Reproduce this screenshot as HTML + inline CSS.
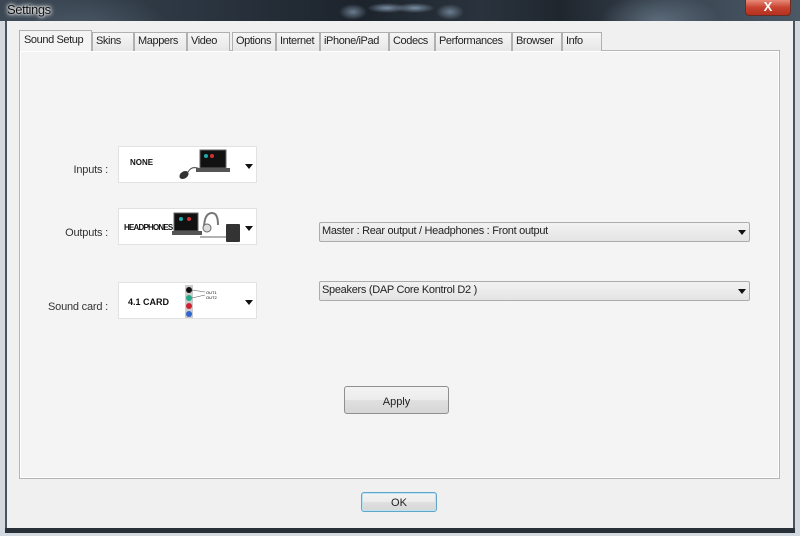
<!DOCTYPE html>
<html><head><style>
*{margin:0;padding:0;box-sizing:border-box}
body{width:800px;height:536px;overflow:hidden;position:relative;background:#d3d9df;font-family:"Liberation Sans",sans-serif;font-size:11px;color:#111}
.abs{position:absolute}
#title{left:0;top:0;width:800px;height:21px;background:
radial-gradient(ellipse 60px 30px at 660px 22px,#5d6c7c,transparent),
radial-gradient(ellipse 90px 40px at 80px 30px,#4a5866,transparent),
radial-gradient(ellipse 14px 8px at 353px 12px,#6b7d90,transparent),
radial-gradient(ellipse 14px 8px at 450px 12px,#6b7d90,transparent),
radial-gradient(ellipse 20px 5px at 387px 8px,#7a8ea2,transparent),
radial-gradient(ellipse 20px 5px at 415px 8px,#7a8ea2,transparent),
linear-gradient(90deg,#3b4753 0%,#2b3540 25%,#1c232b 45%,#2a333d 60%,#1f262e 70%,#3a4652 85%,#4b5866 100%)}
#title span{position:absolute;left:7px;top:2px;font-size:13px;color:#111;letter-spacing:-0.4px;text-shadow:0 0 6px #fff,0 0 4px #fff,0 0 2px #fff}
#close{left:745px;top:0;width:46px;height:16px;background:linear-gradient(#e88a7a,#c8432f 50%,#b2311e);border:1px solid #6a2b24;border-top:none;border-radius:0 0 4px 4px;color:#fff;text-align:center;font-weight:bold;font-size:13px;line-height:14px}
#frameL{left:5px;top:21px;width:2px;height:510px;background:#4a545e}
#frameR{left:793px;top:21px;width:2px;height:510px;background:#4a545e}
#client{left:7px;top:21px;width:786px;height:507px;background:#f0f0f0}
#bottom{left:5px;top:528px;width:790px;height:5px;background:#2a3038}
#panel{left:19px;top:50px;width:761px;height:429px;border:1px solid #b5b5b5;background:#f4f4f4;box-shadow:inset 0 0 0 1px #fff}
.tab{position:absolute;top:32px;height:19px;border:1px solid #b0b0b0;border-bottom:none;background:linear-gradient(#f6f6f6,#e6e6e6);font-size:11px;line-height:17px;padding-left:3px;white-space:nowrap;letter-spacing:-0.4px;color:#222}
.tab.sel{top:30px;height:21px;background:#f4f4f4;z-index:2;line-height:19px;padding-left:4px}
.lbl{position:absolute;text-align:right;width:100px;left:8px;color:#333;font-size:11px;letter-spacing:-0.2px}
.img{position:absolute;left:118px;width:139px;height:37px;background:#fff;border:1px solid #e2e2e2}
.arrow{position:absolute;width:0;height:0;border-left:4px solid transparent;border-right:4px solid transparent;border-top:5px solid #111}
.big{font-family:"Liberation Sans",sans-serif;font-weight:900;font-size:8px;position:absolute;color:#111}
.combo{position:absolute;left:319px;width:431px;height:20px;border:1px solid #acacac;border-radius:2px;background:linear-gradient(#f2f2f2,#e4e4e4);padding-left:2px;line-height:17px;font-size:11px;color:#222;letter-spacing:-0.3px}
.btn{position:absolute;border:1px solid #8f8f8f;border-radius:3px;background:linear-gradient(#f3f3f3 0%,#ececec 50%,#e0e0e0 51%,#d6d6d6 100%);text-align:center;font-size:11px;color:#222}
</style></head><body>
<div id="title" class="abs"><span>Settings</span></div>
<div id="close" class="abs">X</div>
<div id="client" class="abs"></div>
<div id="frameL" class="abs"></div>
<div id="frameR" class="abs"></div>
<div id="bottom" class="abs"></div>
<div id="panel" class="abs"></div>
<div class="tab sel" style="left:19px;width:73px">Sound Setup</div>
<div class="tab" style="left:92px;width:42px">Skins</div>
<div class="tab" style="left:134px;width:53px">Mappers</div>
<div class="tab" style="left:187px;width:43px">Video</div>
<div class="tab" style="left:232px;width:44px">Options</div>
<div class="tab" style="left:276px;width:44px">Internet</div>
<div class="tab" style="left:320px;width:69px">iPhone/iPad</div>
<div class="tab" style="left:389px;width:46px">Codecs</div>
<div class="tab" style="left:435px;width:77px">Performances</div>
<div class="tab" style="left:512px;width:50px">Browser</div>
<div class="tab" style="left:562px;width:40px">Info</div>

<div class="lbl" style="top:164px">Inputs :</div>
<div class="img" style="top:146px">
 <div class="big" style="left:11px;top:11px">NONE</div>
 <svg class="abs" style="left:55px;top:0" width="60" height="36">
  <rect x="26" y="3" width="26" height="18" fill="#111" stroke="#666"/>
  <circle cx="32" cy="9" r="2" fill="#2aa"/><circle cx="38" cy="9" r="2" fill="#c33"/>
  <rect x="22" y="21" width="34" height="4" fill="#555"/>
  <path d="M26 22 Q18 18 14 25" stroke="#555" fill="none"/>
  <ellipse cx="10" cy="28" rx="5" ry="3.5" fill="#333" transform="rotate(-35 10 28)"/>
 </svg>
 <div class="arrow" style="left:126px;top:17px"></div>
</div>

<div class="lbl" style="top:227px">Outputs :</div>
<div class="img" style="top:208px">
 <div class="big" style="left:5px;top:14px;letter-spacing:-0.8px">HEADPHONES</div>
 <svg class="abs" style="left:53px;top:0" width="70" height="37">
  <rect x="2" y="4" width="24" height="18" fill="#111" stroke="#666"/>
  <circle cx="9" cy="10" r="2" fill="#2aa"/><circle cx="17" cy="10" r="2" fill="#c33"/>
  <rect x="0" y="22" width="30" height="4" fill="#555"/>
  <path d="M28 28 H60" stroke="#666" fill="none"/>
  <path d="M32 20 Q32 4 40 4 Q46 4 46 16" stroke="#777" stroke-width="2" fill="none"/>
  <circle cx="35" cy="19" r="4" fill="#ddd" stroke="#666"/>
  <rect x="54" y="15" width="14" height="18" fill="#333" rx="1"/>
 </svg>
 <div class="arrow" style="left:126px;top:17px"></div>
</div>

<div class="lbl" style="top:301px">Sound card :</div>
<div class="img" style="top:282px">
 <div class="big" style="left:9px;top:14px;font-size:9px">4.1 CARD</div>
 <svg class="abs" style="left:64px;top:0" width="50" height="37">
  <rect x="2" y="2" width="8" height="33" fill="#ccc"/>
  <circle cx="6" cy="7" r="3" fill="#111"/><circle cx="6" cy="15" r="3" fill="#2a8"/>
  <circle cx="6" cy="23" r="3" fill="#c23"/><circle cx="6" cy="31" r="3" fill="#36c"/>
  <path d="M9 7 L22 9 M9 15 L22 12" stroke="#555" stroke-width="0.6"/>
  <text x="23" y="11" font-size="4" font-family="Liberation Sans">OUT1</text>
  <text x="23" y="16" font-size="4" font-family="Liberation Sans">OUT2</text>
 </svg>
 <div class="arrow" style="left:126px;top:17px"></div>
</div>

<div class="combo" style="top:222px">Master : Rear output / Headphones : Front output<div class="arrow" style="left:418px;top:7px"></div></div>
<div class="combo" style="top:281px">Speakers (DAP Core Kontrol D2 )<div class="arrow" style="left:418px;top:7px"></div></div>

<div class="btn" style="left:344px;top:386px;width:105px;height:28px;line-height:30px">Apply</div>
<div class="btn" style="left:361px;top:492px;width:76px;height:20px;line-height:20px;border-color:#5fa6c9;box-shadow:inset 0 0 0 1px #bfe3f2">OK</div>
</body></html>
